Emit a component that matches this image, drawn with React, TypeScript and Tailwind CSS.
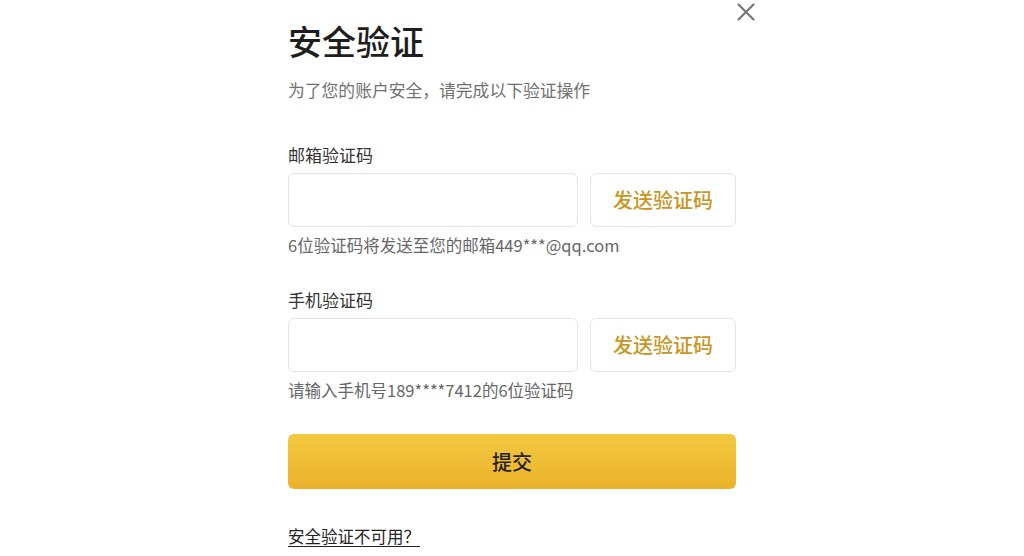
import React from "react";

const font = { fontFamily: '"Noto Sans CJK SC", "Noto Sans", sans-serif' };

function Field({ label, hint }: { label: string; hint: string }) {
  return (
    <div>
      <div className="text-[17px] leading-[24px] text-[#333333]">{label}</div>
      <div className="mt-[6px] flex gap-[12px]">
        <input className="h-[54px] w-[290px] rounded-[6px] border border-[#e4e4e4] bg-white px-3 outline-none" />
        <button className="h-[54px] flex-1 rounded-[6px] border border-[#e4e4e4] bg-white text-[20px] font-medium text-[#c9961f]">
          发送验证码
        </button>
      </div>
      <div className="mt-[6px] text-[16.5px] leading-[24px] text-[#666666]">{hint}</div>
    </div>
  );
}

export default function App() {
  return (
    <div className="relative min-h-[556px] w-full bg-white" style={font}>
      <div className="relative mx-auto w-[448px] pt-[17px]">
        <button className="absolute right-[-20px] top-[2px] text-[#777777]" aria-label="close">
          <svg width="20" height="20" viewBox="0 0 20 20" fill="none" stroke="currentColor" strokeWidth="2.2" strokeLinecap="round">
            <path d="M2.5 2.5L17.5 17.5M17.5 2.5L2.5 17.5" />
          </svg>
        </button>
        <h1 className="text-[34px] leading-[48px] font-medium text-[#1e1e1e]">安全验证</h1>
        <p className="mt-[13px] text-[16.8px] leading-[24px] text-[#707070]">为了您的账户安全，请完成以下验证操作</p>
        <div className="mt-[41px]">
          <Field label="邮箱验证码" hint="6位验证码将发送至您的邮箱449***@qq.com" />
        </div>
        <div className="mt-[31px]">
          <Field label="手机验证码" hint="请输入手机号189****7412的6位验证码" />
        </div>
        <button className="mt-[32px] h-[55px] w-full rounded-[6px] bg-gradient-to-b from-[#f3c93f] to-[#ebb22a] text-[20px] font-medium text-[#222222]">
          提交
        </button>
        <div className="mt-[35px]">
          <a className="text-[16.5px] leading-[24px] text-[#222222] underline underline-offset-[3px]">安全验证不可用？</a>
        </div>
      </div>
    </div>
  );
}
